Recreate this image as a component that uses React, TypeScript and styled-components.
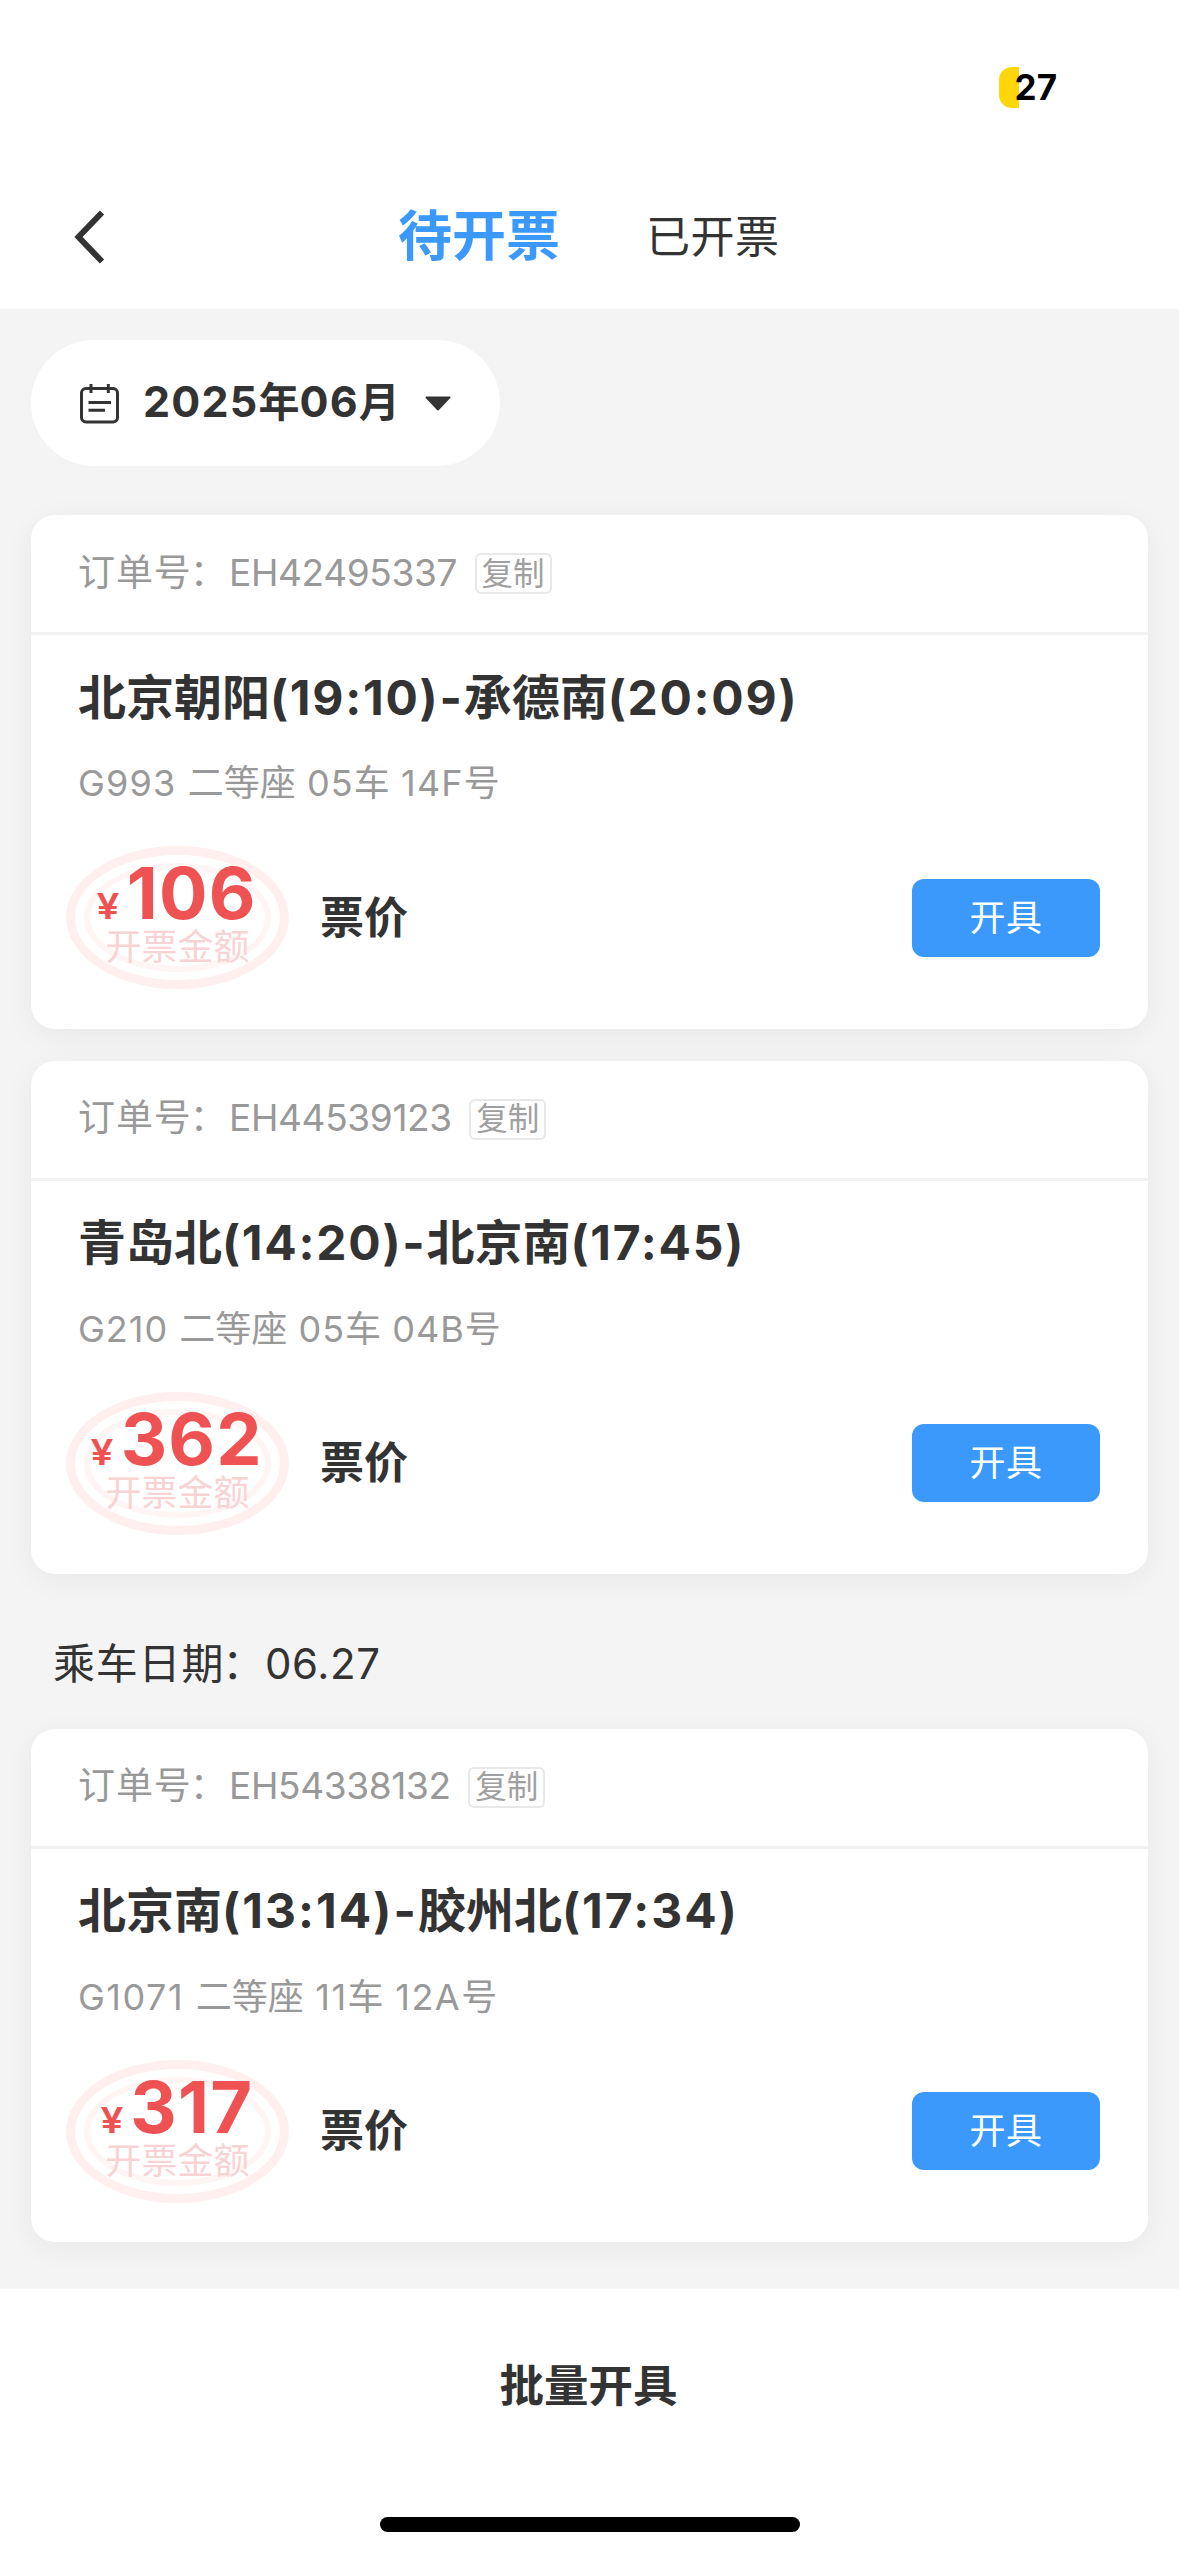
import React from "react";
import styled, { createGlobalStyle } from "styled-components";

const GlobalStyle = createGlobalStyle`
  * { box-sizing: border-box; }
  html, body { margin: 0; padding: 0; background: #f4f4f4; }
  body {
    font-family: Inter, "Noto Sans CJK SC", sans-serif;
    color: #333;
  }
  button { font-family: inherit; border: 0; padding: 0; background: none; color: inherit; }
`;

const Screen = styled.div`
  width: 1179px;
  height: 2556px;
  display: flex;
  flex-direction: column;
  background: #f4f4f4;
  overflow: hidden;
`;

const StatusBar = styled.div`
  height: 165px;
  flex: none;
  background: #fff;
  display: flex;
  align-items: flex-start;
  justify-content: flex-end;
  padding: 67px 122px 0 0;
`;

const Battery = styled.div`
  width: 58px;
  height: 41px;
  display: flex;
  align-items: center;
  justify-content: flex-end;
  font-size: 35px;
  font-weight: 700;
  line-height: 41px;
  color: #000;
  position: relative;
`;

const BatteryLevel = styled.span`
  position: absolute;
  left: 0;
  top: 0;
  width: 20px;
  height: 41px;
  border-radius: 13px 0 0 13px;
  background: #ffd60a;
`;

const BatteryText = styled.span`
  position: relative;
`;

const NavBar = styled.header`
  height: 144px;
  flex: none;
  background: #fff;
  display: flex;
  align-items: flex-start;
  padding: 36px 72px 0;
`;

const BackButton = styled.button`
  width: 36px;
  height: 72px;
  display: flex;
  align-items: center;
  flex: none;
`;

const Tabs = styled.nav`
  display: flex;
  align-items: center;
  height: 72px;
  margin-left: 290px;
  gap: 86px;
`;

const Tab = styled.button<{ $active?: boolean }>`
  font-size: ${(p) => (p.$active ? 54 : 44)}px;
  font-weight: ${(p) => (p.$active ? 700 : 400)};
  line-height: 72px;
  letter-spacing: ${(p) => (p.$active ? 0 : 0.5)}px;
  color: ${(p) => (p.$active ? "#3b99fc" : "#333")};
  white-space: nowrap;
`;

const Content = styled.main`
  height: 1980px;
  flex: none;
  padding: 31px 31px 0;
  display: flex;
  flex-direction: column;
  align-items: stretch;
`;

const MonthPicker = styled.button`
  width: 469px;
  height: 126px;
  flex: none;
  border-radius: 63px;
  background: #fff;
  display: flex;
  align-items: center;
  padding-left: 48px;
  margin-bottom: 49px;
`;

const MonthLabel = styled.span`
  width: 305px;
  flex: none;
  padding: 0 0 3px 23px;
  text-align: left;
  font-size: 43px;
  font-weight: 700;
  line-height: 60px;
  white-space: nowrap;
`;

const Latin = styled.span<{ $track: number }>`
  letter-spacing: ${(p) => p.$track}px;
`;

const Hanzi = styled.span<{ $size?: number }>`
  font-size: ${(p) => (p.$size ? `${p.$size}px` : "inherit")};
`;

const Card = styled.section`
  height: 513.5px;
  flex: none;
  border-radius: 24px;
  background: #fff;
  box-shadow: 0 6px 30px rgba(0, 0, 0, 0.05);
  margin-bottom: 32px;
`;

const CardHead = styled.div`
  height: 120px;
  border-bottom: 3px solid #f2f2f2;
  padding: 33.5px 48px 0 47px;
  display: flex;
  align-items: flex-start;
  color: #999;
  font-size: 37px;
  line-height: 48px;
`;

const OrderLabel = styled.span`
  width: 151px;
  letter-spacing: 0.9px;
  white-space: nowrap;
`;

const Colon = styled.span`
  margin-left: -2px;
`;

const OrderNumber = styled.span`
  letter-spacing: -0.35px;
  white-space: nowrap;
`;

const CopyButton = styled.button`
  width: 77px;
  height: 41px;
  margin: 4.5px 0 0 17.5px;
  border: 2px solid #e8e8e8;
  border-radius: 6px;
  font-size: 31.5px;
  line-height: 36px;
  color: #a0a0a0;
  white-space: nowrap;
`;

const CardBody = styled.div`
  padding: 30.5px 48px 0 47px;
`;

const Route = styled.h2`
  margin: 0;
  font-size: 48px;
  font-weight: 700;
  line-height: 64px;
  white-space: nowrap;
`;

const Seat = styled.p`
  margin: 29.5px 0 0;
  font-size: 36px;
  line-height: 48px;
  color: #999;
  white-space: nowrap;
`;

const PriceRow = styled.div`
  margin-top: 39px;
  height: 143px;
  display: flex;
  align-items: center;
`;

const Stamp = styled.div`
  width: 223px;
  height: 143px;
  margin-left: -12px;
  padding: 6px;
  flex: none;
  border: 9px solid #ffefef;
  border-radius: 50%;
  display: flex;
`;

const StampInner = styled.div`
  flex: 1;
  margin: 2px 3px;
  border: 6px solid #fff5f5;
  border-radius: 50%;
  display: flex;
  flex-direction: column;
  align-items: center;
`;

const Amount = styled.div`
  display: flex;
  align-items: baseline;
  margin-top: -6px;
  height: 60px;
  line-height: 60px;
  color: #ee5253;
  font-weight: 700;
  font-size: 72px;
  letter-spacing: 1.2px;
  white-space: nowrap;
`;

const Currency = styled.span`
  font-size: 36px;
  font-weight: 600;
  margin-right: 7px;
  transform: scaleX(1.13);
`;

const StampText = styled.div`
  margin-top: 2px;
  font-size: 36px;
  line-height: 44px;
  color: #f8d3d3;
  white-space: nowrap;
`;

const PriceLabel = styled.span`
  margin-left: 31px;
  flex: 1;
  font-size: 44px;
  font-weight: 700;
  line-height: 60px;
`;

const IssueButton = styled.button`
  width: 188px;
  height: 78px;
  border-radius: 12px;
  background: #3b99fc;
  color: #fff;
  font-size: 36px;
  line-height: 78px;
  text-align: center;
  letter-spacing: 0.5px;
`;

const RideDate = styled.h3`
  margin: 26px 0 32px 22px;
  height: 64.5px;
  font-size: 42px;
  font-weight: 400;
  line-height: 64px;
  display: flex;
`;

const RideDateLabel = styled.span`
  width: 212px;
  letter-spacing: 0.8px;
  white-space: nowrap;
`;

const RideDateValue = styled.span`
  letter-spacing: 0.6px;
`;

const Footer = styled.footer`
  flex: 1;
  background: #fff;
  display: flex;
  flex-direction: column;
  align-items: center;
  padding-top: 65px;
`;

const BatchButton = styled.button`
  height: 64px;
  padding-right: 2px;
  font-size: 44.5px;
  font-weight: 700;
  line-height: 64px;
`;

const HomeIndicator = styled.div`
  width: 420px;
  height: 15px;
  margin-top: 99px;
  border-radius: 8px;
  background: #000;
`;

const BackIcon = () => (
  <svg width="36" height="60" viewBox="0 0 36 60" fill="none" stroke="#333" strokeWidth="6">
    <path d="M30 5.500 L6.500 30 L30 54.500" />
  </svg>
);

const CalendarIcon = () => (
  <svg width="41" height="42" viewBox="0 0 41 42" fill="none" stroke="#333" strokeWidth="3">
    <rect x="2.500" y="6.500" width="36" height="33.500" rx="4.500" />
    <path d="M12 2V11M29.300 2V11M9.500 20.500H32M9.500 28.300H26" />
  </svg>
);

const CaretIcon = () => (
  <svg width="26" height="15" viewBox="0 0 26 15" fill="#333">
    <path d="M1 .5H25Q26 1 25.300 2L14.200 13.800Q13 15 11.800 13.800L.7 2Q0 1 1 .5Z" />
  </svg>
);

/* Tracks the Latin runs of a mixed string and leaves the Chinese runs at their own pitch. */
const MixedText = ({ text, track, hanziSize }: { text: string; track: number; hanziSize?: number }) => (
  <>
    {(text.match(/[\u4e00-\u9fff]+|[^\u4e00-\u9fff]+/g) ?? []).map((run, i) =>
      /[\u4e00-\u9fff]/.test(run) ? (
        <Hanzi key={i} $size={hanziSize}>
          {run}
        </Hanzi>
      ) : (
        <Latin key={i} $track={track}>
          {run}
        </Latin>
      )
    )}
  </>
);

interface Ticket {
  order: string;
  route: string;
  seat: string;
  amount: string;
  routeTrack: number;
  seatTrack: number;
}

const tickets: Ticket[] = [
  { order: "EH42495337", route: "北京朝阳(19:10)-承德南(20:09)", seat: "G993 二等座 05车 14F号", amount: "106", routeTrack: 1.75, seatTrack: 1.15 },
  { order: "EH44539123", route: "青岛北(14:20)-北京南(17:45)", seat: "G210 二等座 05车 04B号", amount: "362", routeTrack: 1.75, seatTrack: 1 },
  { order: "EH54338132", route: "北京南(13:14)-胶州北(17:34)", seat: "G1071 二等座 11车 12A号", amount: "317", routeTrack: 2.05, seatTrack: 1.5 },
];

const TicketCard = ({ ticket }: { ticket: Ticket }) => (
  <Card>
    <CardHead>
      <OrderLabel>
        订单号<Colon>：</Colon>
      </OrderLabel>
      <OrderNumber>{ticket.order}</OrderNumber>
      <CopyButton>复制</CopyButton>
    </CardHead>
    <CardBody>
      <Route>
        <MixedText text={ticket.route} track={ticket.routeTrack} />
      </Route>
      <Seat>
        <MixedText text={ticket.seat} track={ticket.seatTrack} />
      </Seat>
      <PriceRow>
        <Stamp>
          <StampInner>
            <Amount>
              <Currency>¥</Currency>
              {ticket.amount}
            </Amount>
            <StampText>开票金额</StampText>
          </StampInner>
        </Stamp>
        <PriceLabel>票价</PriceLabel>
        <IssueButton>开具</IssueButton>
      </PriceRow>
    </CardBody>
  </Card>
);

export default function App() {
  return (
    <>
      <GlobalStyle />
      <Screen>
        <StatusBar>
          <Battery>
            <BatteryLevel />
            <BatteryText>27</BatteryText>
          </Battery>
        </StatusBar>
        <NavBar>
          <BackButton aria-label="返回">
            <BackIcon />
          </BackButton>
          <Tabs>
            <Tab $active>待开票</Tab>
            <Tab>已开票</Tab>
          </Tabs>
        </NavBar>
        <Content>
          <MonthPicker>
            <CalendarIcon />
            <MonthLabel>
              <MixedText text="2025年06月" track={1.2} hanziSize={41} />
            </MonthLabel>
            <CaretIcon />
          </MonthPicker>
          <TicketCard ticket={tickets[0]} />
          <TicketCard ticket={tickets[1]} />
          <RideDate>
            <RideDateLabel>
              乘车日期<Colon>：</Colon>
            </RideDateLabel>
            <RideDateValue>06.27</RideDateValue>
          </RideDate>
          <TicketCard ticket={tickets[2]} />
        </Content>
        <Footer>
          <BatchButton>批量开具</BatchButton>
          <HomeIndicator />
        </Footer>
      </Screen>
    </>
  );
}
